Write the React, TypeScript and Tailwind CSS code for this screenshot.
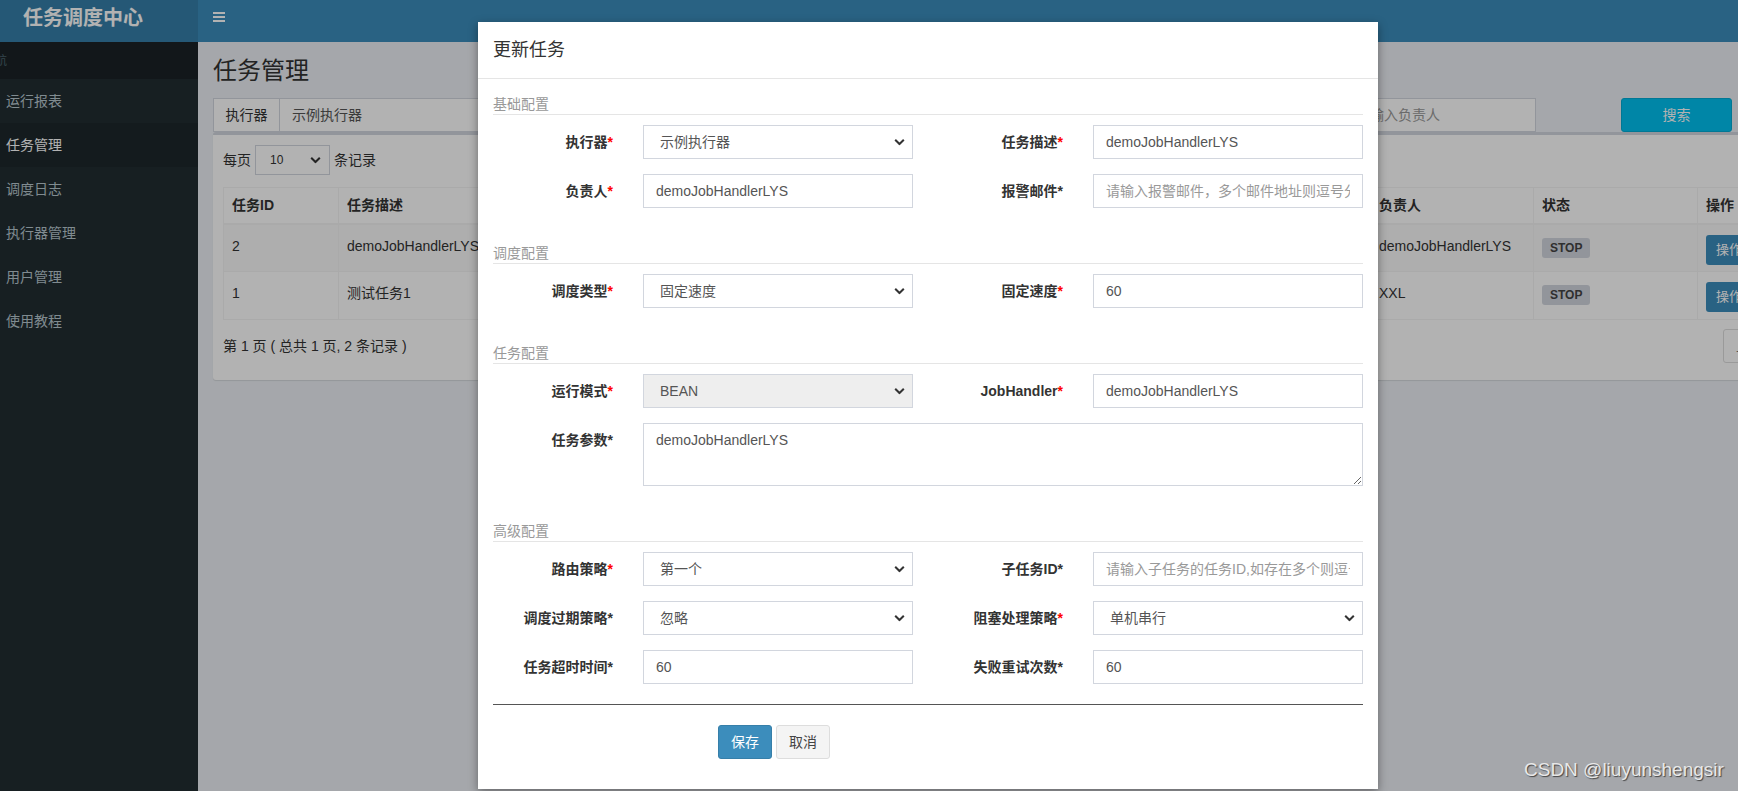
import React from 'react'

type Field = {
  label: string
  req: boolean
  kind: 'select' | 'input'
  value?: string
  placeholder?: string
  disabled?: boolean
}

type Section = {
  title: string
  rows: Field[][]
  textarea?: { label: string; value: string; afterRow: number }
}

const menus = ['运行报表', '任务管理', '调度日志', '执行器管理', '用户管理', '使用教程']

const sections: Section[] = [
  {
    title: '基础配置',
    rows: [
      [
        { label: '执行器', req: true, kind: 'select', value: '示例执行器' },
        { label: '任务描述', req: true, kind: 'input', value: 'demoJobHandlerLYS' },
      ],
      [
        { label: '负责人', req: true, kind: 'input', value: 'demoJobHandlerLYS' },
        { label: '报警邮件', req: false, kind: 'input', placeholder: '请输入报警邮件，多个邮件地址则逗号分隔' },
      ],
    ],
  },
  {
    title: '调度配置',
    rows: [
      [
        { label: '调度类型', req: true, kind: 'select', value: '固定速度' },
        { label: '固定速度', req: true, kind: 'input', value: '60' },
      ],
    ],
  },
  {
    title: '任务配置',
    rows: [
      [
        { label: '运行模式', req: true, kind: 'select', value: 'BEAN', disabled: true },
        { label: 'JobHandler', req: true, kind: 'input', value: 'demoJobHandlerLYS' },
      ],
    ],
    textarea: { label: '任务参数', value: 'demoJobHandlerLYS', afterRow: 0 },
  },
  {
    title: '高级配置',
    rows: [
      [
        { label: '路由策略', req: true, kind: 'select', value: '第一个' },
        { label: '子任务ID', req: false, kind: 'input', placeholder: '请输入子任务的任务ID,如存在多个则逗号分隔' },
      ],
      [
        { label: '调度过期策略', req: false, kind: 'select', value: '忽略' },
        { label: '阻塞处理策略', req: true, kind: 'select', value: '单机串行' },
      ],
      [
        { label: '任务超时时间', req: false, kind: 'input', value: '60' },
        { label: '失败重试次数', req: false, kind: 'input', value: '60' },
      ],
    ],
  },
]

const jobs = [
  { id: '2', desc: 'demoJobHandlerLYS', type: 'FIX_RATE: 60', mode: 'BEAN: demoJobHandlerLYS', owner: 'demoJobHandlerLYS' },
  { id: '1', desc: '测试任务1', type: 'CRON: 0 0 0 * * ? *', mode: 'BEAN: demoJobHandler', owner: 'XXL' },
]

function Chevron() {
  return (
    <svg className="pointer-events-none absolute right-[8px] top-1/2 -translate-y-1/2" width="11" height="7" viewBox="0 0 11 7">
      <path d="M1.2 1.2 5.5 5.5 9.8 1.2" fill="none" stroke="#333" strokeWidth="2" />
    </svg>
  )
}

function Label({ text, req }: { text: string; req: boolean }) {
  return (
    <div className="w-[150px] shrink-0 px-[15px] flex items-center justify-end font-bold text-[14px] text-[#333] leading-[20px]">
      <span>{text}</span>
      <span className={req ? 'text-[#f00]' : 'text-[#333]'}>*</span>
    </div>
  )
}

function Control({ f }: { f: Field }) {
  if (f.kind === 'select') {
    return (
      <div className="relative h-[34px]">
        <select
          disabled={f.disabled}
          defaultValue={f.value}
          className={`h-[34px] w-full appearance-none border border-[#d2d6de] pl-[16px] pr-[24px] text-[14px] text-[#555] outline-none ${f.disabled ? 'bg-[#eee]' : 'bg-white'}`}
        >
          <option>{f.value}</option>
        </select>
        <Chevron />
      </div>
    )
  }
  return (
    <input
      defaultValue={f.value}
      placeholder={f.placeholder}
      className="h-[34px] w-full border border-[#d2d6de] bg-white px-[12px] text-[14px] text-[#555] outline-none placeholder:text-[#999]"
    />
  )
}

function FormRow({ fields }: { fields: Field[] }) {
  return (
    <div className="-mx-[15px] mb-[15px] flex h-[34px]">
      {fields.map((f) => (
        <React.Fragment key={f.label}>
          <Label text={f.label} req={f.req} />
          <div className="w-[300px] shrink-0 px-[15px]">
            <Control f={f} />
          </div>
        </React.Fragment>
      ))}
    </div>
  )
}

function Modal() {
  return (
    <div className="absolute left-[478px] top-[22px] w-[900px] bg-white shadow-[0_3px_9px_rgba(0,0,0,0.4)]">
      {/* header */}
      <div className="border-b border-[#e5e5e5] px-[15px] py-[15px]">
        <h4 className="text-[18px] leading-[26px] text-[#333]">更新任务</h4>
      </div>

      <div className="flex flex-col p-[15px]">
        {sections.map((s, si) => (
          <div key={s.title} className={`flex flex-col ${si === 0 ? '' : 'pt-[20px]'}`}>
            <div className="mb-[10px] border-b border-[#e5e5e5] text-[14px] leading-[20px] text-[#999]">{s.title}</div>
            {s.rows.map((r, ri) => (
              <React.Fragment key={ri}>
                <FormRow fields={r} />
                {s.textarea && s.textarea.afterRow === ri && (
                  <div className="-mx-[15px] mb-[15px] flex">
                    <div className="w-[150px] shrink-0 px-[15px] pt-[7px] flex justify-end font-bold text-[14px] text-[#333] leading-[20px]">
                      <span>{s.textarea.label}</span>
                      <span>*</span>
                    </div>
                    <div className="w-[750px] shrink-0 px-[15px]">
                      <textarea
                        defaultValue={s.textarea.value}
                        className="block h-[63px] w-full border border-[#d2d6de] bg-white px-[12px] py-[6px] text-[14px] leading-[20px] text-[#555] outline-none"
                      />
                    </div>
                  </div>
                )}
              </React.Fragment>
            ))}
          </div>
        ))}

        <hr className="mt-[5px] border-0 border-t border-[#555]" />

        <div className="mt-[20px] mb-[15px] flex gap-[4px] pl-[225px]">
          <button className="h-[34px] w-[54px] rounded-[3px] border border-[#367fa9] bg-[#3c8dbc] text-[14px] text-white">保存</button>
          <button className="h-[34px] w-[54px] rounded-[3px] border border-[#ddd] bg-[#f4f4f4] text-[14px] text-[#444]">取消</button>
        </div>
      </div>
    </div>
  )
}

export default function App() {
  return (
    <div className="relative h-[791px] w-[1738px] overflow-hidden bg-[#ecf0f5] font-['Liberation_Sans','Noto_Sans_CJK_SC',sans-serif] text-[#333]">
      <div className="flex h-full">
        {/* sidebar */}
        <aside className="flex w-[198px] shrink-0 flex-col bg-[#222d32]">
          <div className="h-[42px] bg-[#367fa9] pl-[23px] pt-[6px] text-[20px] font-bold leading-[24px] text-white">任务调度中心</div>
          <div className="flex h-[37px] items-center overflow-hidden bg-[#1a2226] text-[12px] text-[#4b646f]">
            <span className="-ml-[17px] whitespace-nowrap">导航</span>
          </div>
          {menus.map((m) => (
            <div
              key={m}
              className={`flex h-[44px] items-center pl-[6px] text-[14px] ${m === '任务管理' ? 'bg-[#1e282c] text-white' : 'text-[#b8c7ce]'}`}
            >
              {m}
            </div>
          ))}
        </aside>

        <div className="flex min-w-0 flex-1 flex-col">
          {/* top bar */}
          <header className="flex h-[42px] shrink-0 items-center bg-[#3c8dbc] pl-[15px]">
            <svg width="12" height="10" viewBox="0 0 12 10" className="-mt-[8px]">
              <rect x="0" y="0" width="12" height="2" fill="#fff" />
              <rect x="0" y="4" width="12" height="2" fill="#fff" />
              <rect x="0" y="8" width="12" height="2" fill="#fff" />
            </svg>
          </header>

          {/* content */}
          <main className="w-[1692px] shrink-0 px-[15px] pt-[15px]">
            <h1 className="text-[24px] leading-[28px] text-[#333]">任务管理</h1>

            <div className="mt-[13px] flex h-[34px]">
              <div className="flex w-[393px]">
                <div className="flex w-[67px] items-center justify-center border border-[#d2d6de] bg-white text-[14px]">执行器</div>
                <div className="relative flex-1">
                  <div className="flex h-[34px] items-center border border-l-0 border-[#d2d6de] bg-white pl-[12px] text-[14px] text-[#555]">示例执行器</div>
                </div>
              </div>
              <div className="ml-[30px] w-[338px] border border-[#d2d6de] bg-white" />
              <div className="ml-[30px] w-[309px] border border-[#d2d6de] bg-white" />
              <div className="ml-[30px] flex w-[193px] items-center border border-[#d2d6de] bg-white pl-[12px] text-[14px] text-[#999]">请输入负责人</div>
              <button className="ml-[85px] w-[111px] rounded-[3px] border border-[#00acd6] bg-[#00c0ef] text-[14px] text-white">搜索</button>
            </div>

            {/* box */}
            <div className="rounded-[3px] border-t-[3px] border-[#d2d6de] bg-white p-[10px] pb-[8px] shadow-[0_1px_1px_rgba(0,0,0,0.1)]">
              <div className="flex h-[30px] items-center gap-[4px] text-[14px]">
                <span>每页</span>
                <div className="relative h-[30px] w-[75px] border border-[#d2d6de] bg-white">
                  <span className="absolute left-[14px] top-1/2 -translate-y-1/2 text-[12px]">10</span>
                  <Chevron />
                </div>
                <span>条记录</span>
              </div>

              <table className="mt-[12px] w-[1642px] table-fixed border-collapse border border-[#f4f4f4] text-[14px]">
                <colgroup>
                  <col className="w-[115px]" />
                  <col className="w-[344px]" />
                  <col className="w-[344px]" />
                  <col className="w-[344px]" />
                  <col className="w-[163px]" />
                  <col className="w-[164px]" />
                  <col />
                </colgroup>
                <thead>
                  <tr className="h-[36px] border-b-2 border-[#f4f4f4]">
                    {['任务ID', '任务描述', '调度类型', '运行模式', '负责人', '状态', '操作'].map((h) => (
                      <th key={h} className="border border-[#f4f4f4] px-[8px] text-left font-bold">{h}</th>
                    ))}
                  </tr>
                </thead>
                <tbody>
                  {jobs.map((j, i) => (
                    <tr key={j.id} className={`h-[48px] ${i === 0 ? 'bg-[#f9f9f9]' : ''}`}>
                      <td className="border border-[#f4f4f4] px-[8px] pt-[11px] align-top">{j.id}</td>
                      <td className="border border-[#f4f4f4] px-[8px] pt-[11px] align-top">{j.desc}</td>
                      <td className="border border-[#f4f4f4] px-[8px] pt-[11px] align-top">{j.type}</td>
                      <td className="border border-[#f4f4f4] px-[8px] pt-[11px] align-top">{j.mode}</td>
                      <td className="border border-[#f4f4f4] px-[8px] pt-[11px] align-top">{j.owner}</td>
                      <td className="border border-[#f4f4f4] px-[8px] pt-[12px] align-top">
                        <span className="inline-block h-[20px] rounded-[3px] bg-[#d2d6de] px-[8px] text-[12px] font-bold leading-[20px] text-[#444]">STOP</span>
                      </td>
                      <td className="border border-[#f4f4f4] px-[8px] pt-[10px] align-top">
                        <button className="h-[30px] rounded-[3px] bg-[#3c8dbc] px-[10px] text-[13px] text-white">操作 ▾</button>
                      </td>
                    </tr>
                  ))}
                </tbody>
              </table>

              <div className="flex h-[52px] items-center justify-between">
                <span className="text-[14px]">第 1 页 ( 总共 1 页, 2 条记录 )</span>
                <div className="mr-[88px] flex h-[34px]">
                  <button className="h-[34px] rounded-[3px] border border-[#ddd] bg-white px-[12px] text-[14px] text-[#777]">上页</button>
                </div>
              </div>
            </div>
          </main>
        </div>
      </div>

      {/* modal backdrop */}
      <div className="absolute inset-0 bg-black/30" />

      <Modal />

      <div className="absolute left-[1524px] top-[760px] text-[19px] leading-none text-[#e8e8e8] [text-shadow:1px_1px_1px_#444]">
        CSDN @liuyunshengsir
      </div>
    </div>
  )
}
